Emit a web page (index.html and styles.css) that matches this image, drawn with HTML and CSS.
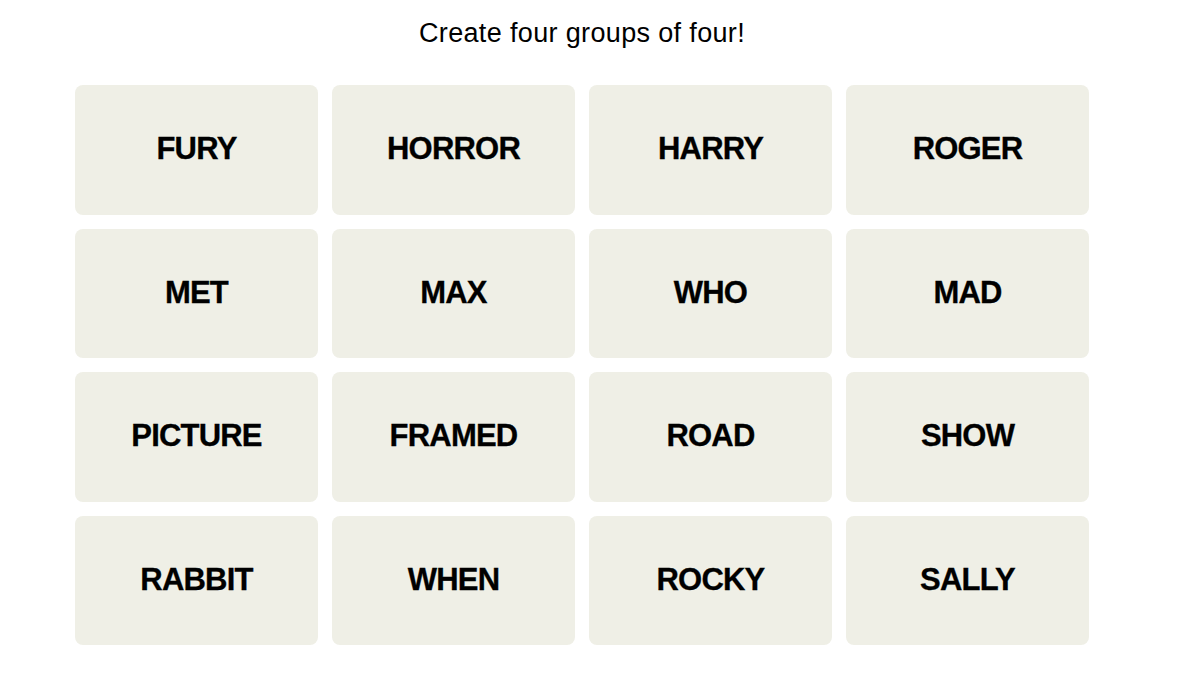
FILE: index.html
```html
<!DOCTYPE html>
<html>
<head>
<meta charset="utf-8">
<link rel="stylesheet" href="styles.css">
</head>
<body>
<main class="game">
  <h1 class="title">Create four groups of four!</h1>
  <div class="board">
    <div class="tile">FURY</div>
    <div class="tile">HORROR</div>
    <div class="tile">HARRY</div>
    <div class="tile">ROGER</div>
    <div class="tile">MET</div>
    <div class="tile">MAX</div>
    <div class="tile">WHO</div>
    <div class="tile">MAD</div>
    <div class="tile">PICTURE</div>
    <div class="tile">FRAMED</div>
    <div class="tile">ROAD</div>
    <div class="tile">SHOW</div>
    <div class="tile">RABBIT</div>
    <div class="tile">WHEN</div>
    <div class="tile">ROCKY</div>
    <div class="tile">SALLY</div>
  </div>
</main>
</body>
</html>
```
FILE: styles.css
```css
html, body {
  margin: 0;
  padding: 0;
  background: #ffffff;
}
body {
  font-family: "Liberation Sans", Arial, sans-serif;
  color: #000;
}
.game {
  width: 1014px;
  margin-left: 75px;
  padding-top: 14px;
}
.title {
  margin: 0;
  font-size: 27px;
  font-weight: 400;
  letter-spacing: 0.35px;
  line-height: 38px;
  text-align: center;
  height: 71px;
}
.board {
  display: grid;
  grid-template-columns: repeat(4, 243px);
  grid-auto-rows: 129.5px;
  column-gap: 14px;
  row-gap: 14px;
}
.tile {
  background: #efefe6;
  border-radius: 8px;
  display: flex;
  align-items: center;
  justify-content: center;
  padding-bottom: 1px;
  box-sizing: border-box;
  font-size: 31px;
  font-weight: 700;
  letter-spacing: -0.8px;
  -webkit-text-stroke: 0.3px #000;
}
```
